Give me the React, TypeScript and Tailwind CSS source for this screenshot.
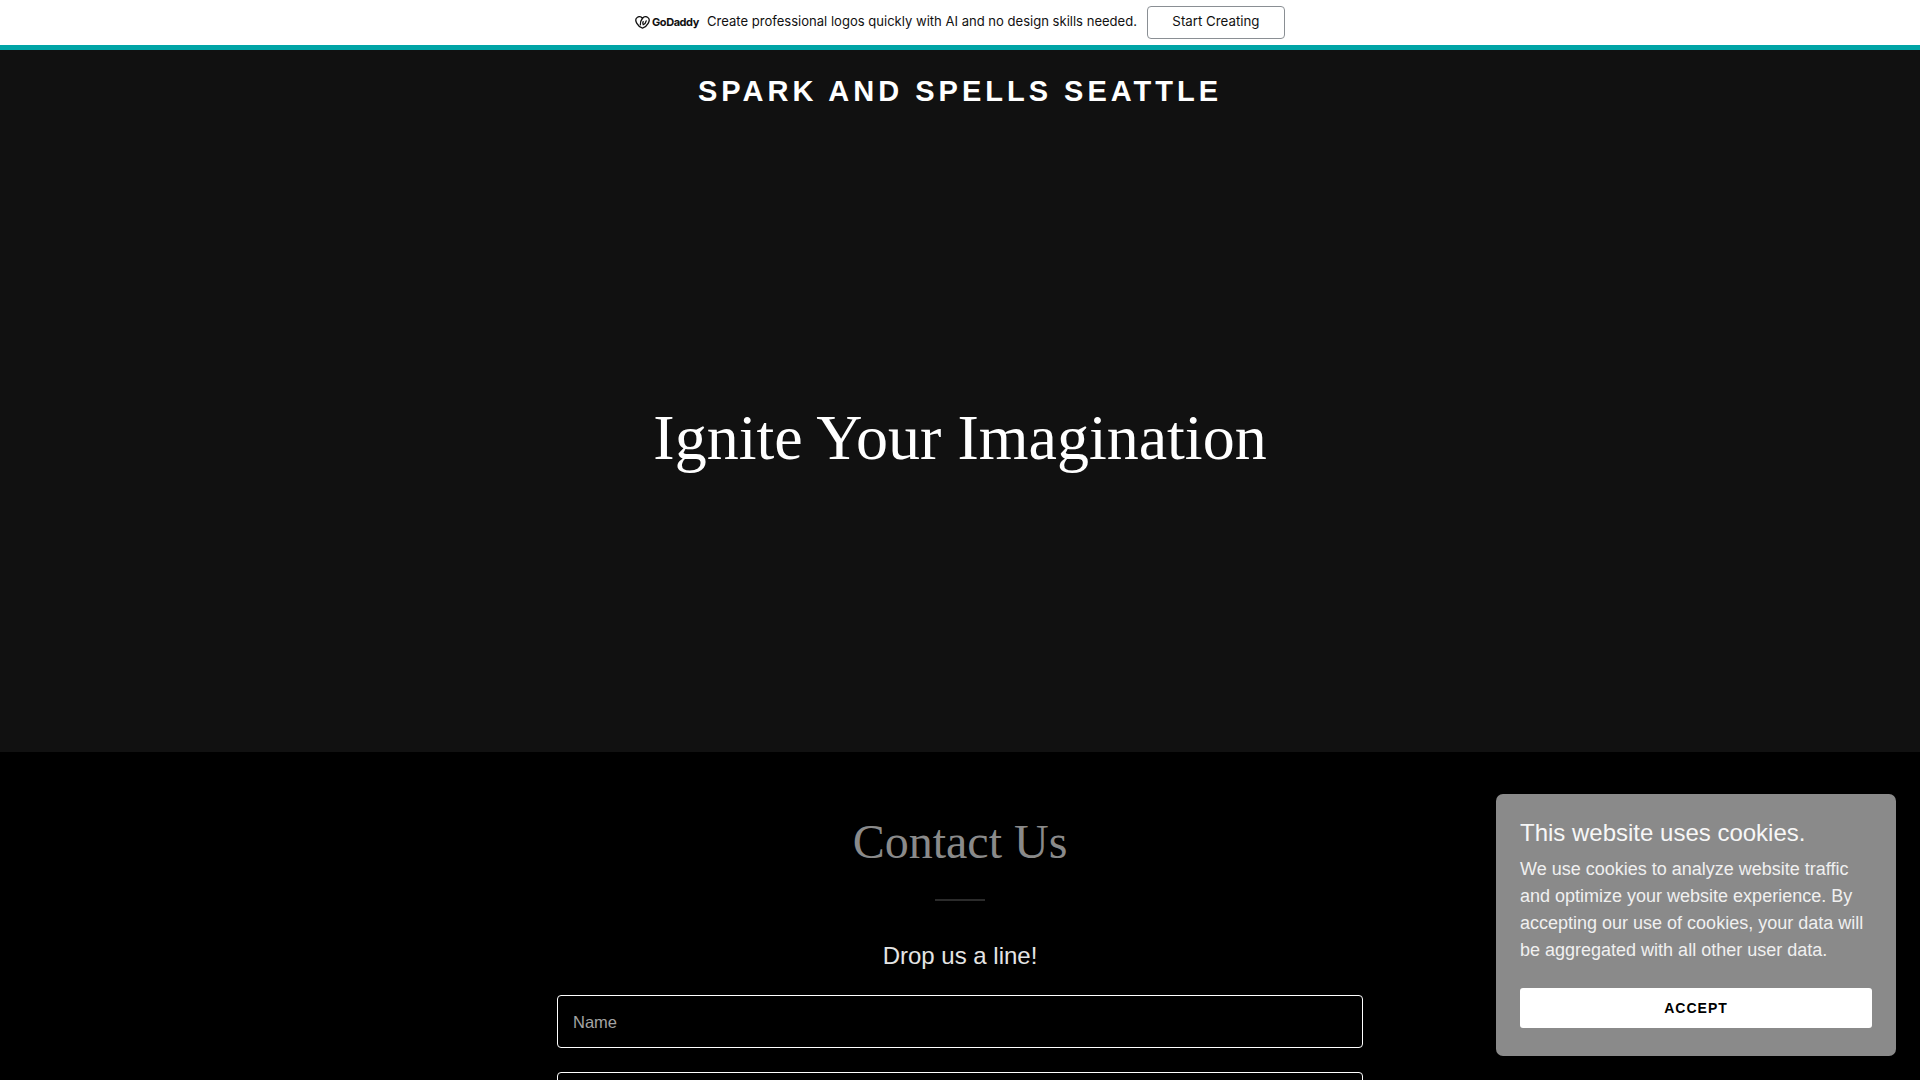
const GoDaddyMark = () => (
  <svg width="15" height="13" viewBox="0 0 16 14" fill="none" stroke="#111" strokeWidth="1.4" strokeLinecap="round" className="shrink-0">
    <path d="M8 2.400C9.400.9 11.700.3 13.400 1.300c2 1.200 2.200 4 .7 6.600-1.200 2.100-3.500 4.400-6.100 5.200-2.600-.8-4.900-3.100-6.100-5.200C.4 5.300.6 2.500 2.600 1.300 4.300.3 6.600.9 8 2.400Z" />
    <path d="M8 2.400C6.400 4.400 5.500 7 5.700 9.400M12 5.200c-.4 1.900-1.500 3.500-3.200 4.200-.6-1.100-.6-2.300-.1-3.300" />
  </svg>
);

const App = () => {
  return (
    <div className="h-screen overflow-hidden bg-black font-['Liberation_Sans',sans-serif]">
      <div className="h-[50px] bg-white border-b-[5px] border-[#00a4a6] flex items-center justify-center">
        <div className="flex items-center">
          <GoDaddyMark />
          <span className="ml-[2px] mb-[1px] w-[46px] text-[11px] font-bold tracking-[-0.45px] whitespace-nowrap text-[#111] font-['Inter',sans-serif]">GoDaddy</span>
          <span className="ml-[9px] mb-[2px] text-[13.05px] text-[#111] font-['Inter',sans-serif]">
            Create professional logos quickly with AI and no design skills needed.
          </span>
          <button className="ml-[10px] w-[138px] h-[33px] pb-[2px] rounded-[4px] border border-[#8a8f94] bg-white text-[13.3px] text-[#111] font-['Inter',sans-serif]">
            Start Creating
          </button>
        </div>
      </div>

      <section className="h-[702px] bg-[#111111] flex flex-col">
        <div className="pt-[24px] text-center text-[29px] leading-[34px] font-bold tracking-[4px] text-white">
          SPARK AND SPELLS SEATTLE
        </div>
        <div className="flex-1 flex items-center justify-center pt-[16px]">
          <h1 className="text-[64px] leading-[76px] text-white font-['Liberation_Serif',serif]">Ignite Your Imagination</h1>
        </div>
      </section>

      <section className="pt-[61px] flex flex-col items-center">
        <h2 className="text-[48px] leading-[58px] text-[#8a8a8a] font-['Liberation_Serif',serif]">Contact Us</h2>
        <div className="mt-[28px] w-[50px] h-[2px] bg-[#2b2b2b]" />
        <p className="mt-[40px] text-[24px] leading-[29px] text-[#e4e4e4]">Drop us a line!</p>
        <form className="mt-[25px] w-[806px] flex flex-col gap-[24px]">
          <input
            placeholder="Name"
            className="w-full h-[53px] pl-[15px] pr-[16px] pt-[2px] rounded-[4px] border border-white bg-black text-[16.5px] text-white placeholder:text-[#a4a4a4] outline-none"
          />
          <input className="w-full h-[53px] px-[16px] rounded-[4px] border border-white bg-black" />
        </form>
      </section>

      <div className="fixed right-[24px] bottom-[24px] w-[400px] h-[262px] rounded-[7px] bg-[#8a8a8a] p-[24px]">
        <h4 className="text-[24px] leading-[30px] text-[#f7f7f7]">This website uses cookies.</h4>
        <p className="mt-[8px] text-[18px] leading-[27px] text-[#f0f0f0]">
          We use cookies to analyze website traffic and optimize your website experience. By accepting our use of cookies, your data will be aggregated with all other user data.
        </p>
        <button className="mt-[24px] w-full h-[40px] rounded-[3px] bg-white text-[14px] font-bold tracking-[1px] text-black">
          ACCEPT
        </button>
      </div>
    </div>
  );
};

export default App;
